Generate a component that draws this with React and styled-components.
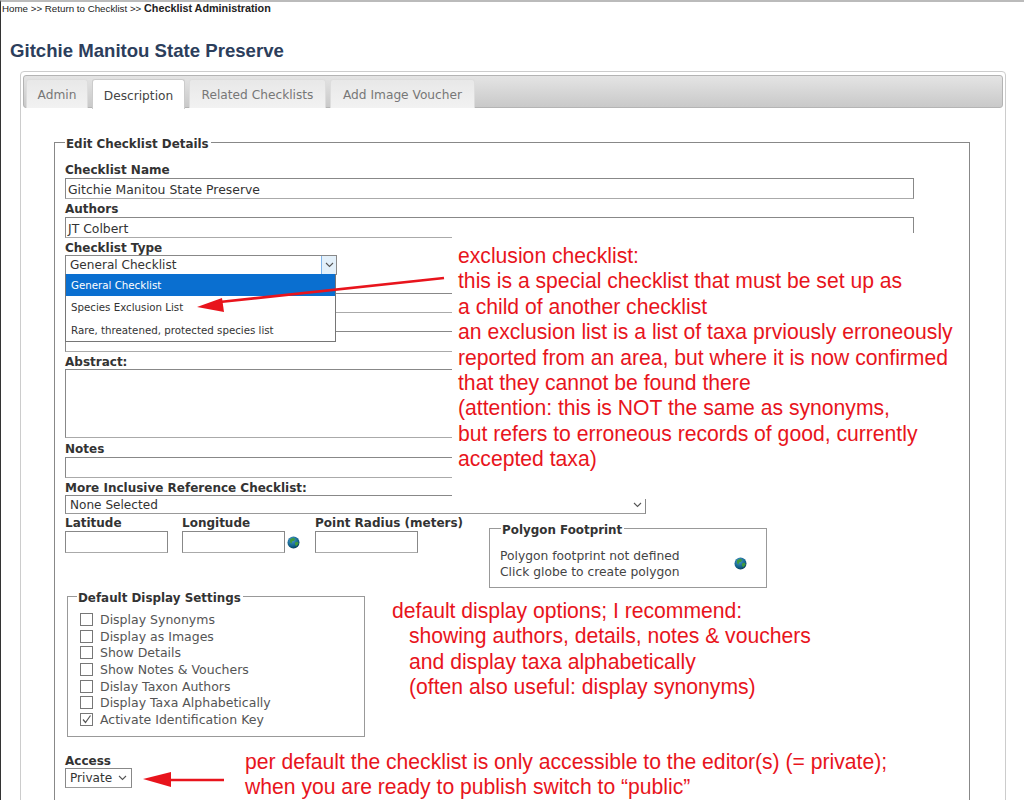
import React from 'react';
import styled, { createGlobalStyle } from 'styled-components';

const GlobalStyle = createGlobalStyle`
  html, body {
    margin: 0;
    padding: 0;
    background: #fff;
  }
`;

const Page = styled.div`
  position: relative;
  width: 1024px;
  height: 800px;
  overflow: hidden;
  box-sizing: border-box;
  border-top: 2px solid #bbb;
  border-left: 1px solid #333;
  font-family: "DejaVu Sans", Verdana, sans-serif;
  color: #333;
`;

const Crumbs = styled.div`
  margin-left: -1px;
  padding-left: 2px;
  position: relative;
  background: #fff;
  font-family: "Liberation Sans", Arial, sans-serif;
  font-size: 9.75px;
  line-height: 13px;
  color: #222;

  b {
    font-size: 10.8px;
  }
`;

const Title = styled.h1`
  margin: 25px 0 10px 9px;
  font-family: "Liberation Sans", Arial, sans-serif;
  font-size: 18.6px;
  line-height: 21px;
  font-weight: bold;
  color: #2c3e5c;
`;

const Panel = styled.div`
  margin-left: 19px;
  width: 986px;
  height: 760px;
  box-sizing: border-box;
  padding: 3px 2px;
  border: 1px solid #ccc;
  border-radius: 4px;
`;

const TabBar = styled.div`
  display: flex;
  gap: 4px;
  height: 33px;
  box-sizing: border-box;
  padding: 3px 0 0 2px;
  border: 1px solid #b4b4b4;
  border-radius: 3px;
  background: linear-gradient(#e4e4e4, #c9c9c9);
`;

const Tab = styled.div`
  width: ${(p) => p.$w}px;
  height: ${(p) => (p.$active ? 30 : 29)}px;
  box-sizing: border-box;
  padding-top: 2px;
  display: flex;
  align-items: center;
  justify-content: center;
  font-size: 12.2px;
  color: ${(p) => (p.$active ? '#444' : '#777')};
  background: ${(p) => (p.$active ? '#fff' : 'linear-gradient(#e8e8e8, #f2f2f2)')};
  border-radius: 3px 3px 0 0;
  border: 1px solid ${(p) => (p.$active ? '#ccc' : '#ddd')};
  border-bottom: none;
`;

const Fieldset = styled.fieldset`
  margin: 0;
  padding: 0;
  box-sizing: border-box;
  border: 1px solid ${(p) => p.$line || '#888'};
`;

const Legend = styled.legend`
  padding: 4px 2px 0 1px;
  font-size: 11.9px;
  font-weight: bold;
  line-height: 14px;
  color: #333;
  margin-left: ${(p) => p.$left || 0}px;
`;

const Details = styled(Fieldset)`
  margin: 25px 0 0 31px;
  width: 916px;
  height: 702px;
  padding: 12px 10px 0;
`;

const Label = styled.div`
  height: 13px;
  font-size: 12px;
  font-weight: bold;
  line-height: 15px;
  color: #333;
  white-space: nowrap;
  margin-top: ${(p) => p.$top || 0}px;
`;

const TextBox = styled.div`
  width: ${(p) => p.$w || 849}px;
  height: ${(p) => p.$h || 21}px;
  box-sizing: border-box;
  margin-top: ${(p) => p.$top ?? 2}px;
  padding: 3px 2px 0;
  border: 1px solid #888;
  border-bottom-color: #aaa;
  font-size: 12.4px;
  line-height: 15px;
  color: #333;
  background: #fff;
`;

const SelectBox = styled.div`
  position: relative;
  width: ${(p) => p.$w}px;
  height: ${(p) => p.$h || 20}px;
  box-sizing: border-box;
  margin-top: ${(p) => p.$top ?? 1}px;
  padding: 0 4px;
  border: 1px solid #888;
  border-bottom-color: #999;
  font-size: 12.1px;
  line-height: 18px;
  color: #333;
  background: #fff;
`;

const ArrowCell = styled.span`
  position: absolute;
  top: 0;
  right: 0;
  width: ${(p) => p.$w || 15}px;
  height: 100%;
  box-sizing: border-box;
  display: flex;
  align-items: center;
  justify-content: center;
  background: ${(p) => (p.$open ? '#e3f0fa' : 'transparent')};
  border-left: ${(p) => (p.$open ? '1px solid #7eb4ea' : 'none')};
`;

const Dropdown = styled.div`
  position: absolute;
  top: 18px;
  left: -1px;
  width: 271px;
  box-sizing: border-box;
  border: 1px solid #767676;
  border-top: none;
  background: #fff;
  font-size: 10.25px;
  z-index: 2;
`;

const Option = styled.div`
  height: 22.3px;
  line-height: 22px;
  padding-left: 5px;
  color: ${(p) => (p.$on ? '#fff' : '#333')};
  background: ${(p) => (p.$on ? '#0a6fd0' : '#fff')};
`;

const LowerRow = styled.div`
  display: flex;
  margin-top: 2px;
`;

const CoordField = styled.div`
  flex: none;
  width: ${(p) => p.$w}px;
`;

const InlineRow = styled.div`
  display: flex;
  align-items: center;
  gap: 2px;
`;

const Globe = styled.svg`
  display: block;
  flex: none;
  margin-top: ${(p) => p.$top || 0}px;
`;

const PolygonBox = styled(Fieldset)`
  margin: 3px 0 0;
  width: 278px;
  height: 69px;
  padding: 0 19px 0 10px;
  border-color: #999;
  display: flex;
`;

const PolygonBody = styled.div`
  flex: 1;
  display: flex;
  align-items: center;
  justify-content: space-between;
  margin-top: 3px;
  font-size: 12.3px;
  line-height: 16px;
  color: #444;
`;

const SettingsBox = styled(Fieldset)`
  margin: -1px 0 0 2px;
  width: 298px;
  height: 150px;
  padding: 6px 0 0 12px;
  border-color: #999;
`;

const CheckRow = styled.div`
  display: flex;
  align-items: center;
  gap: 7px;
  height: 16.7px;
  font-size: 12.5px;
  color: #555;
`;

const Check = styled.span`
  width: 13px;
  height: 13px;
  box-sizing: border-box;
  border: 1px solid #777;
  display: flex;
  align-items: center;
  justify-content: center;
  background: #fff;
`;

const Note = styled.div`
  position: absolute;
  left: ${(p) => p.$x}px;
  top: ${(p) => p.$y}px;
  font-family: "Liberation Sans", Arial, sans-serif;
  font-size: 21.15px;
  line-height: ${(p) => p.$lh || 25.4}px;
  color: #e8141c;
  white-space: nowrap;
  z-index: 3;
`;

const Indented = styled.div`
  padding-left: 17px;
`;

const Mask = styled.div`
  position: absolute;
  left: 451px;
  top: 231px;
  width: 515px;
  height: 266px;
  background: #fff;
  z-index: 1;
`;

const Overlay = styled.svg`
  position: absolute;
  left: -1px;
  top: -2px;
  z-index: 4;
  pointer-events: none;
`;

const Chevron = ({ color = '#555' }) => (
  <svg width="9" height="6" viewBox="0 0 9 6">
    <path d="M1 1l3.5 3.5L8 1" fill="none" stroke={color} strokeWidth="1.1" />
  </svg>
);

const GlobeIcon = ({ id, top }) => (
  <Globe $top={top} width="13" height="13" viewBox="0 0 13 13">
    <defs>
      <radialGradient id={id} cx="40%" cy="30%" r="75%">
        <stop offset="0%" stopColor="#4a9ad0" />
        <stop offset="70%" stopColor="#0f5f86" />
        <stop offset="100%" stopColor="#0a3550" />
      </radialGradient>
    </defs>
    <circle cx="6.5" cy="6.5" r="6" fill={`url(#${id})`} />
    <path d="M3 3.2l3-1.4 2.2 1-1 2-2.2.6-.4 2.2-1.6-1.4zM8 6.5l2.8-.8.8 2-2.4 2.6-1.2-1.6z" fill="#3f9a3c" />
  </Globe>
);

const settings = [
  ['Display Synonyms', false],
  ['Display as Images', false],
  ['Show Details', false],
  ['Show Notes & Vouchers', false],
  ['Dislay Taxon Authors', false],
  ['Display Taxa Alphabetically', false],
  ['Activate Identification Key', true],
];

const App = () => (
  <Page>
    <GlobalStyle />
    <Crumbs>
      Home &gt;&gt; Return to Checklist &gt;&gt; <b>Checklist Administration</b>
    </Crumbs>
    <Title>Gitchie Manitou State Preserve</Title>
    <Panel>
      <TabBar>
        <Tab $w={62}>Admin</Tab>
        <Tab $w={93} $active>Description</Tab>
        <Tab $w={137}>Related Checklists</Tab>
        <Tab $w={145}>Add Image Voucher</Tab>
      </TabBar>
      <Details>
        <Legend>Edit Checklist Details</Legend>
        <Label>Checklist Name</Label>
        <TextBox>Gitchie Manitou State Preserve</TextBox>
        <Label $top={3}>Authors</Label>
        <TextBox>JT Colbert</TextBox>
        <Label $top={3}>Checklist Type</Label>
        <SelectBox $w={272}>
          General Checklist
          <ArrowCell $open><Chevron /></ArrowCell>
          <Dropdown>
            <Option $on>General Checklist</Option>
            <Option>Species Exclusion List</Option>
            <Option>Rare, threatened, protected species list</Option>
          </Dropdown>
        </SelectBox>
        <TextBox $top={18} $h={20} />
        <TextBox $top={18} $h={21} />
        <Label $top={3}>Abstract:</Label>
        <TextBox $top={1} $h={69} />
        <Label $top={4}>Notes</Label>
        <TextBox $top={2} />
        <Label $top={3}>More Inclusive Reference Checklist:</Label>
        <SelectBox $w={581} $h={19}>
          None Selected
          <ArrowCell><Chevron /></ArrowCell>
        </SelectBox>
        <LowerRow>
          <CoordField $w={117}>
            <Label>Latitude</Label>
            <TextBox $w={103} $h={22} $top={2} />
          </CoordField>
          <CoordField $w={133}>
            <Label>Longitude</Label>
            <InlineRow>
              <TextBox $w={103} $h={22} $top={2} />
              <GlobeIcon id="globe-a" top={2} />
            </InlineRow>
          </CoordField>
          <CoordField $w={174}>
            <Label>Point Radius (meters)</Label>
            <TextBox $w={103} $h={22} $top={2} />
          </CoordField>
          <PolygonBox>
            <Legend $left={1}>Polygon Footprint</Legend>
            <PolygonBody>
              <div>
                Polygon footprint not defined
                <br />
                Click globe to create polygon
              </div>
              <GlobeIcon id="globe-b" />
            </PolygonBody>
          </PolygonBox>
        </LowerRow>
        <SettingsBox>
          <Legend $left={-3}>Default Display Settings</Legend>
          {settings.map(([name, on]) => (
            <CheckRow key={name}>
              <Check>
                {on && (
                  <svg width="11" height="11" viewBox="0 0 11 11">
                    <path d="M2 5.5l2.5 3L9.500 1.500" fill="none" stroke="#555" strokeWidth="1.2" />
                  </svg>
                )}
              </Check>
              {name}
            </CheckRow>
          ))}
        </SettingsBox>
        <Label $top={17}>Access</Label>
        <SelectBox $w={67} $top={1}>
          Private
          <ArrowCell $w={18}><Chevron /></ArrowCell>
        </SelectBox>
      </Details>
    </Panel>

    <Mask />
    <Note $x={457} $y={241}>
      exclusion checklist:
      <br />
      this is a special checklist that must be set up as
      <br />
      a child of another checklist
      <br />
      an exclusion list is a list of taxa prviously erroneously
      <br />
      reported from an area, but where it is now confirmed
      <br />
      that they cannot be found there
      <br />
      (attention: this is NOT the same as synonyms,
      <br />
      but refers to erroneous records of good, currently
      <br />
      accepted taxa)
    </Note>
    <Note $x={391} $y={596}>
      default display options; I recommend:
      <Indented>
        showing authors, details, notes &amp; vouchers
        <br />
        and display taxa alphabetically
        <br />
        (often also useful: display synonyms)
      </Indented>
    </Note>
    <Note $x={244} $y={747} $lh={25}>
      per default the checklist is only accessible to the editor(s) (= private);
      <br />
      when you are ready to publish switch to “public”
    </Note>
    <Overlay width="1024" height="800" viewBox="0 0 1024 800">
      <path d="M444 278L215 302.5" stroke="#e8141c" strokeWidth="2.6" fill="none" />
      <path d="M197 307L222 298L224 312Z" fill="#e8141c" />
      <path d="M224 780L160 780" stroke="#e8141c" strokeWidth="2.6" fill="none" />
      <path d="M143 779L171 772L171 787Z" fill="#e8141c" />
    </Overlay>
  </Page>
);

export default App;
